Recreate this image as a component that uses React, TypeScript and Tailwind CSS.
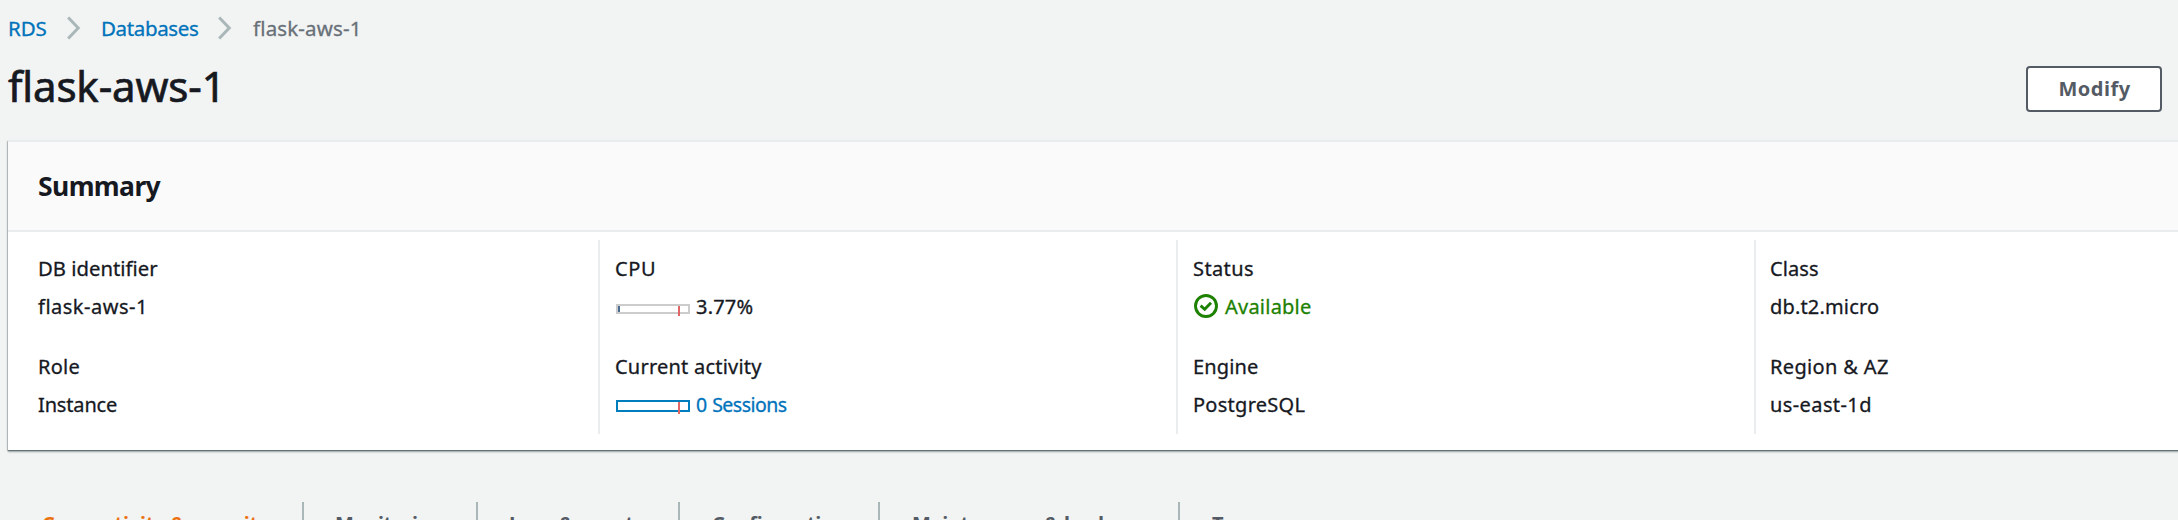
import type { ReactNode } from "react";

function Chevron() {
  return (
    <svg className="block h-6 w-4 shrink-0" viewBox="0 0 16 24" fill="none" stroke="#aab7b8" strokeWidth="3">
      <path d="M1.2 1.5 11.2 12 1.2 22.5" />
    </svg>
  );
}

function StatusCheck() {
  return (
    <svg className="mt-0.5 ml-0.5 block size-6 shrink-0" viewBox="0 0 24 24" fill="none" stroke="#1d8102" strokeWidth="2.9">
      <circle cx="12" cy="12" r="10.5" />
      <path d="M6.6 11.7 10.7 15.3 17 8.8" />
    </svg>
  );
}

function CpuMeter() {
  return (
    <svg className="ml-0.5 block h-7 w-[74px] shrink-0" viewBox="0 0 74 28" shapeRendering="crispEdges">
      <rect x="1" y="13" width="72" height="8" fill="#fff" stroke="#ccc" strokeWidth="2" />
      <rect x="2" y="14" width="2" height="6" fill="#486d8f" />
      <rect x="62" y="14" width="2" height="10" fill="#e06666" />
    </svg>
  );
}

function SessionMeter() {
  return (
    <svg className="ml-0.5 block h-7 w-[74px] shrink-0" viewBox="0 0 74 28" shapeRendering="crispEdges">
      <rect x="1" y="11" width="72" height="10" fill="#fff" stroke="#007dbc" strokeWidth="2" />
      <rect x="62" y="12" width="2" height="12" fill="#e06666" />
    </svg>
  );
}

function Field({ label, children }: { label: ReactNode; children: ReactNode }) {
  return (
    <div className="flex flex-col gap-2.5 leading-[30px]">
      <div className="flex h-7 items-start">{label}</div>
      <div className="flex h-7 items-start">{children}</div>
    </div>
  );
}

function Column({ divider = true, children }: { divider?: boolean; children: ReactNode }) {
  return (
    <div
      className={
        divider
          ? "flex w-[578px] shrink-0 flex-col gap-8 border-l-2 border-[#eaeded] pt-3.5 pb-4 pl-3.5"
          : "flex w-[570px] shrink-0 flex-col gap-8 pt-3.5 pb-4 pl-[9px]"
      }
    >
      {children}
    </div>
  );
}

const tabs = [
  { label: "Connectivity & security", style: "w-[294px] pl-[34px] tracking-[-0.18px] text-[#ec7211]" },
  { label: "Monitoring", style: "w-[174px] border-l-2 pl-[31px] tracking-[-0.49px]" },
  { label: "Logs & events", style: "w-[202px] border-l-2 pl-[31px] tracking-[-0.3px]" },
  { label: "Configuration", style: "w-[200px] border-l-2 pl-8 tracking-[-0.36px]" },
  { label: "Maintenance & backups", style: "w-[300px] border-l-2 pl-8 tracking-[-0.3px]" },
  { label: "Tags", style: "w-[120px] border-l-2 pl-8" },
];

export default function App() {
  return (
    <div className="h-[520px] w-full overflow-hidden bg-[#f2f3f3] font-['Noto_Sans',sans-serif] text-[20px] leading-7 text-[#16191f] [-webkit-text-stroke:0.3px]">
      <nav className="flex h-14 items-center pl-2 text-[20.5px]">
        <a className="w-[59px] tracking-[-0.1px] text-[#0073bb]">RDS</a>
        <Chevron />
        <a className="ml-[18px] w-[117px] tracking-[-0.36px] text-[#0073bb]">Databases</a>
        <Chevron />
        <span className="ml-[19px] tracking-[0.15px] text-[#687078]">flask-aws-1</span>
      </nav>

      <header className="flex h-[84px] items-start justify-between pr-4 pl-2">
        <h1 className="text-[42px] leading-[59px] tracking-[-0.15px] [-webkit-text-stroke:0.7px]">flask-aws-1</h1>
        <button className="mt-2.5 h-[46px] w-[136px] rounded-[4px] border-2 border-[#545b64] bg-white pl-px text-[20px] font-bold tracking-[0.5px] text-[#545b64] [-webkit-text-stroke:0px]">
          Modify
        </button>
      </header>

      <section className="ml-2 h-[310px] w-[2190px] bg-white shadow-[0_2px_2px_0_rgba(0,28,36,0.3),0_1px_1px_0_#879596,-1px_1px_1px_0_rgba(0,28,36,0.15)]">
        <div className="flex h-[92px] items-center border-y-2 border-[#eaeded] bg-[#fafafa] pl-[30px]">
          <h2 className="text-[26.5px] font-bold tracking-[-0.6px] [-webkit-text-stroke:0px]">Summary</h2>
        </div>
        <div className="flex pt-2 pl-5">
          <Column divider={false}>
            <Field label={<span className="ml-px text-[20.3px] leading-7">DB identifier</span>}>
              <span className="ml-px tracking-[0.5px]">flask-aws-1</span>
            </Field>
            <Field label={<span className="ml-px tracking-[0.27px]">Role</span>}>
              <span className="ml-px tracking-[-0.15px]">Instance</span>
            </Field>
          </Column>
          <Column>
            <Field label={<span className="ml-px tracking-[0.63px]">CPU</span>}>
              <CpuMeter />
              <span className="ml-1.5 tracking-[0.21px]">3.77%</span>
            </Field>
            <Field label={<span className="ml-px tracking-[0.22px]">Current activity</span>}>
              <SessionMeter />
              <a className="ml-1.5 text-[19.5px] tracking-[-0.52px] [word-spacing:1px] text-[#0073bb]">0 Sessions</a>
            </Field>
          </Column>
          <Column>
            <Field label={<span className="ml-px tracking-[0.4px]">Status</span>}>
              <StatusCheck />
              <span className="ml-[7px] tracking-[0.23px] text-[#1d8102]">Available</span>
            </Field>
            <Field label={<span className="ml-px tracking-[0.14px]">Engine</span>}>
              <span className="ml-px tracking-[0.27px]">PostgreSQL</span>
            </Field>
          </Column>
          <Column>
            <Field label={<span className="tracking-[0.1px]">Class</span>}>
              <span className="tracking-[0.17px]">db.t2.micro</span>
            </Field>
            <Field label={<span className="tracking-[0.35px]">Region &amp; AZ</span>}>
              <span className="tracking-[0.4px]">us-east-1d</span>
            </Field>
          </Column>
        </div>
      </section>

      <div className="mt-[52px] flex h-14 pl-2 font-bold text-[#545b64] [-webkit-text-stroke:0px]">
        {tabs.map((tab) => (
          <div key={tab.label} className={`h-full shrink-0 border-[#aab7b8] pt-2 whitespace-nowrap ${tab.style}`}>
            {tab.label}
          </div>
        ))}
      </div>
    </div>
  );
}
